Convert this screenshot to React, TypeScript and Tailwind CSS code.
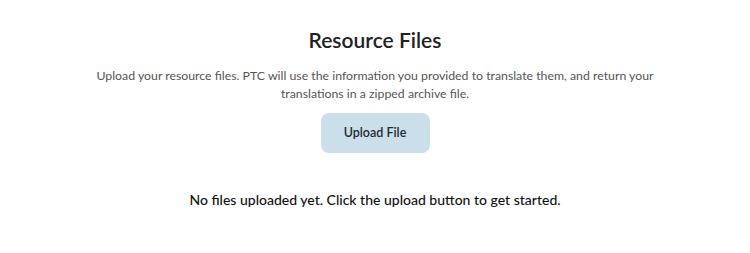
export default function App() {
  return (
    <div
      className="flex min-h-[253px] w-full flex-col items-center bg-white pt-[26px]"
      style={{ fontFamily: 'Lato, "Open Sans", sans-serif' }}
    >
      <h1 className="text-[21px] font-semibold leading-7 text-[#222]">Resource Files</h1>
      <p className="mt-[13px] max-w-[580px] text-center text-[12.3px] leading-[18px] text-[#555]">
        Upload your resource files. PTC will use the information you provided to translate them, and return your
        translations in a zipped archive file.
      </p>
      <button className="mt-[10px] h-[40px] w-[109px] rounded-lg bg-[#cadfe9] text-[12.5px] font-semibold text-[#1f2a33]">
        Upload File
      </button>
      <p className="mt-[36px] text-[14px] font-medium text-[#111]">
        No files uploaded yet. Click the upload button to get started.
      </p>
    </div>
  );
}
